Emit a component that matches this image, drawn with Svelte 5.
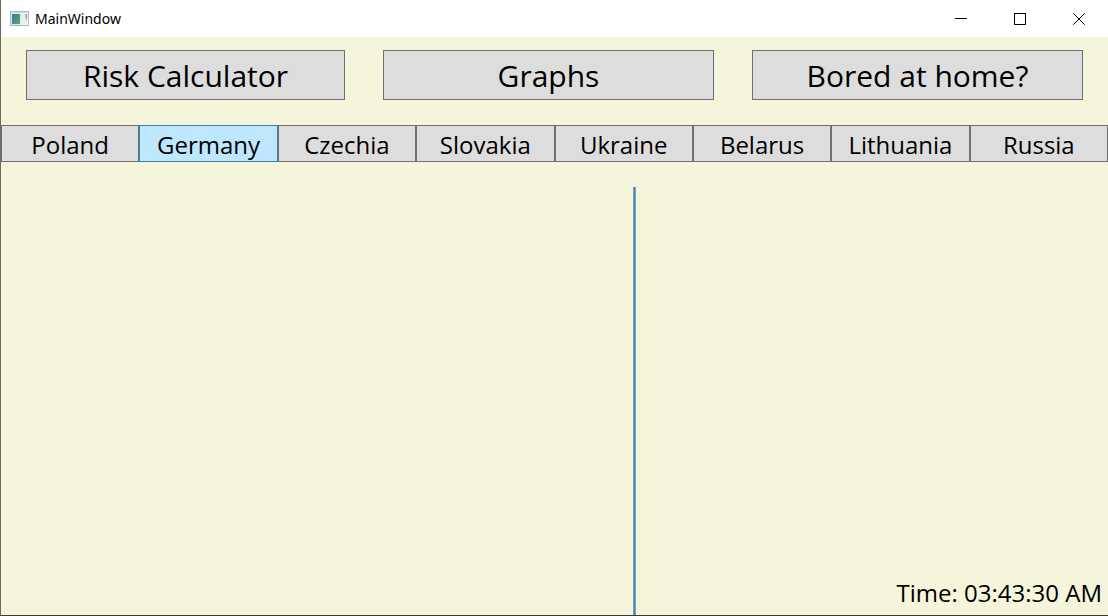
<script>
  const pages = ['Risk Calculator', 'Graphs', 'Bored at home?'];
  const countries = ['Poland', 'Germany', 'Czechia', 'Slovakia', 'Ukraine', 'Belarus', 'Lithuania', 'Russia'];
  let selected = $state('Germany');
  let time = $state('03:43:30 AM');
</script>

<div class="window">
  <header class="titlebar">
    <svg class="app-icon" width="20" height="16" viewBox="0 0 20 16" aria-hidden="true">
      <defs>
        <linearGradient id="pane" x1="0" y1="0" x2="1" y2="1">
          <stop offset="0" stop-color="#3c76ae" />
          <stop offset="0.5" stop-color="#458f8c" />
          <stop offset="1" stop-color="#5cb070" />
        </linearGradient>
        <linearGradient id="strip" x1="0" y1="0" x2="0" y2="1">
          <stop offset="0" stop-color="#6a9fd0" />
          <stop offset="1" stop-color="#8fcf9c" />
        </linearGradient>
      </defs>
      <rect x="1.5" y="0.5" width="18" height="14" fill="#f3f4f5" stroke="#b3b7bd" />
      <rect x="2" y="1" width="17" height="1" fill="#d5dae0" />
      <rect x="2.5" y="2.5" width="9" height="11" fill="url(#pane)" stroke="#dfe6e8" />
      <rect x="12" y="3" width="6" height="10" fill="#eceeee" />
      <path d="M16.5 3h1.5v7l-1.5-3z" fill="url(#strip)" />
    </svg>
    <span class="title">MainWindow</span>
    <div class="controls">
      <button aria-label="Minimize">
        <svg width="12" height="12" viewBox="0 0 12 12"><path d="M0 5.5h12" /></svg>
      </button>
      <button aria-label="Maximize">
        <svg width="12" height="12" viewBox="0 0 12 12"><rect x="0.5" y="0.5" width="11" height="11" /></svg>
      </button>
      <button aria-label="Close">
        <svg width="12" height="12" viewBox="0 0 12 12"><path d="M0.3 0.3l11.4 11.4M11.7 0.3L0.3 11.7" /></svg>
      </button>
    </div>
  </header>

  <nav class="pages">
    {#each pages as page}
      <button>{page}</button>
    {/each}
  </nav>

  <nav class="countries">
    {#each countries as country}
      <button class:selected={selected === country} onclick={() => (selected = country)}>{country}</button>
    {/each}
  </nav>

  <main>
    <section class="chart"></section>
    <section class="side">
      <p class="clock">Time: {time}</p>
    </section>
  </main>
</div>

<style>
  .window {
    box-sizing: border-box;
    display: flex;
    flex-direction: column;
    min-height: 100vh;
    border-left: 1px solid #6a6a66;
    border-bottom: 1px solid #3a3a35;
    background: #f5f5dc;
    color: #000;
    font-family: "Open Sans", "Noto Sans", sans-serif;
  }

  button {
    margin: 0;
    padding: 0;
    font-family: inherit;
    color: inherit;
  }

  .titlebar {
    display: flex;
    align-items: center;
    height: 37px;
    padding: 0 0 0 8px;
    background: #fff;
  }

  .title {
    margin-left: 6px;
    font-family: "Noto Sans", sans-serif;
    font-size: 14px;
    line-height: 20px;
  }

  .controls {
    display: flex;
    align-self: stretch;
    margin-left: auto;
  }

  .controls button {
    display: flex;
    align-items: center;
    justify-content: center;
    width: 59px;
    border: 0;
    background: none;
  }

  .controls svg {
    fill: none;
    stroke: #000;
    stroke-width: 1;
  }

  .pages {
    display: grid;
    grid-template-columns: repeat(3, 1fr);
    padding: 13px 0 25px;
  }

  .pages button {
    height: 50px;
    margin: 0 25px 0 13px;
    padding-top: 2px;
    border: 1px solid #707070;
    background: #ddd;
    font-size: 30px;
    line-height: 46px;
  }

  .pages button:first-child {
    margin-left: 25px;
  }

  .countries {
    display: grid;
    grid-template-columns: repeat(8, 1fr);
  }

  .countries button {
    height: 37px;
    padding-top: 2px;
    border: 1px solid #707070;
    background: #ddd;
    font-size: 24px;
    line-height: 33px;
  }

  .countries .selected {
    border-color: #3c7fb1;
    background: #bee6fd;
  }

  main {
    flex: 1;
    display: grid;
    grid-template-columns: 4fr 3fr;
    padding: 25px 1px 0 0;
  }

  .side {
    display: flex;
    align-items: flex-end;
    justify-content: flex-end;
    background: linear-gradient(to right, #79a3c0 1px, #4682b4 1px 2px, #79a3c0 2px 3px, transparent 3px);
  }

  .clock {
    margin: 0;
    padding: 0 5px 6px 0;
    font-size: 24px;
    line-height: 32px;
  }
</style>
